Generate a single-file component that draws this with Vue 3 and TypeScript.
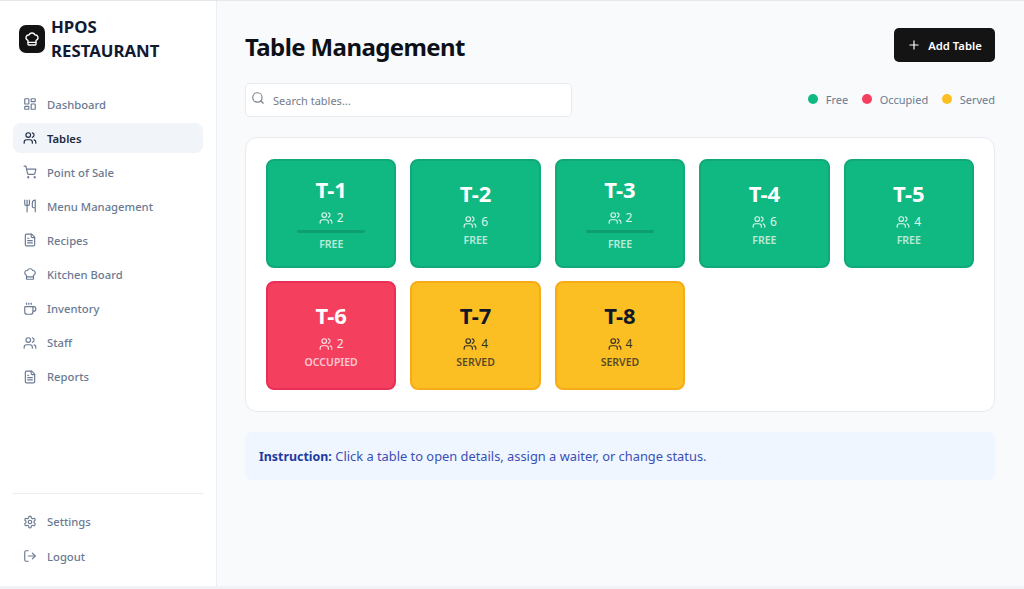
<script setup lang="ts">
interface NavItem { label: string; icon: string; active?: boolean }
interface TableItem { id: string; seats: number; status: 'free' | 'occupied' | 'served'; bar?: boolean }

const nav: NavItem[] = [
  { label: 'Dashboard', icon: 'grid' },
  { label: 'Tables', icon: 'users', active: true },
  { label: 'Point of Sale', icon: 'cart' },
  { label: 'Menu Management', icon: 'food' },
  { label: 'Recipes', icon: 'doc' },
  { label: 'Kitchen Board', icon: 'chef' },
  { label: 'Inventory', icon: 'coffee' },
  { label: 'Staff', icon: 'users' },
  { label: 'Reports', icon: 'doc' },
]
const bottom: NavItem[] = [
  { label: 'Settings', icon: 'gear' },
  { label: 'Logout', icon: 'logout' },
]
const tables: TableItem[] = [
  { id: 'T-1', seats: 2, status: 'free', bar: true },
  { id: 'T-2', seats: 6, status: 'free' },
  { id: 'T-3', seats: 2, status: 'free', bar: true },
  { id: 'T-4', seats: 6, status: 'free' },
  { id: 'T-5', seats: 4, status: 'free' },
  { id: 'T-6', seats: 2, status: 'occupied' },
  { id: 'T-7', seats: 4, status: 'served' },
  { id: 'T-8', seats: 4, status: 'served' },
]
const legend = [
  { label: 'Free', cls: 'free' },
  { label: 'Occupied', cls: 'occupied' },
  { label: 'Served', cls: 'served' },
]
const paths: Record<string, string[]> = {
  grid: [
    'M4 3h5a1 1 0 0 1 1 1v7a1 1 0 0 1-1 1H4a1 1 0 0 1-1-1V4a1 1 0 0 1 1-1z',
    'M15 3h5a1 1 0 0 1 1 1v3a1 1 0 0 1-1 1h-5a1 1 0 0 1-1-1V4a1 1 0 0 1 1-1z',
    'M15 12h5a1 1 0 0 1 1 1v7a1 1 0 0 1-1 1h-5a1 1 0 0 1-1-1v-7a1 1 0 0 1 1-1z',
    'M4 16h5a1 1 0 0 1 1 1v3a1 1 0 0 1-1 1H4a1 1 0 0 1-1-1v-3a1 1 0 0 1 1-1z',
  ],
  users: ['M16 21v-2a4 4 0 0 0-4-4H6a4 4 0 0 0-4 4v2', 'M9 3a4 4 0 1 0 0 8 4 4 0 0 0 0-8z', 'M22 21v-2a4 4 0 0 0-3-3.87', 'M16 3.13a4 4 0 0 1 0 7.75'],
  cart: ['M8 21a1 1 0 1 0 0-.01z', 'M19 21a1 1 0 1 0 0-.01z', 'M2 2h3l2.7 12.4a2 2 0 0 0 2 1.6h8.7a2 2 0 0 0 2-1.6L22 7H6'],
  food: ['M3 2v7c0 1.1.9 2 2 2h4a2 2 0 0 0 2-2V2', 'M7 2v20', 'M21 15V2a5 5 0 0 0-5 5v6c0 1.1.9 2 2 2h3zm0 0v7'],
  doc: ['M15 2H6a2 2 0 0 0-2 2v16a2 2 0 0 0 2 2h12a2 2 0 0 0 2-2V7z', 'M14 2v4a2 2 0 0 0 2 2h4', 'M10 9H8', 'M16 13H8', 'M16 17H8'],
  chef: ['M17 21a1 1 0 0 0 1-1v-5.35c0-.457.316-.844.727-1.041a4 4 0 0 0-2.134-7.589 5 5 0 0 0-9.186 0 4 4 0 0 0-2.134 7.588c.411.198.727.585.727 1.041V20a1 1 0 0 0 1 1z', 'M6 17h12'],
  coffee: ['M10 2v2', 'M14 2v2', 'M6 2v2', 'M16 8a1 1 0 0 1 1 1v8a4 4 0 0 1-4 4H7a4 4 0 0 1-4-4V9a1 1 0 0 1 1-1h14a4 4 0 1 1 0 8h-1'],
  gear: ['M12.2 2h-.4a2 2 0 0 0-2 2v.2a2 2 0 0 1-1 1.7l-.4.3a2 2 0 0 1-2 0l-.2-.1a2 2 0 0 0-2.7.7l-.2.4a2 2 0 0 0 .7 2.7l.2.1a2 2 0 0 1 1 1.7v.5a2 2 0 0 1-1 1.8l-.2.1a2 2 0 0 0-.7 2.7l.2.4a2 2 0 0 0 2.7.7l.2-.1a2 2 0 0 1 2 0l.4.3a2 2 0 0 1 1 1.7v.2a2 2 0 0 0 2 2h.4a2 2 0 0 0 2-2v-.2a2 2 0 0 1 1-1.7l.4-.3a2 2 0 0 1 2 0l.2.1a2 2 0 0 0 2.7-.7l.2-.4a2 2 0 0 0-.7-2.7l-.2-.1a2 2 0 0 1-1-1.8v-.5a2 2 0 0 1 1-1.7l.2-.1a2 2 0 0 0 .7-2.7l-.2-.4a2 2 0 0 0-2.7-.7l-.2.1a2 2 0 0 1-2 0l-.4-.3a2 2 0 0 1-1-1.7V4a2 2 0 0 0-2-2z', 'M12 9a3 3 0 1 0 0 6 3 3 0 0 0 0-6z'],
  logout: ['M9 21H5a2 2 0 0 1-2-2V5a2 2 0 0 1 2-2h4', 'M16 17l5-5-5-5', 'M21 12H9'],
}
</script>

<template>
  <div class="app">
    <aside class="sidebar">
      <div class="brand">
        <div class="logo">
          <svg viewBox="0 0 24 24" width="16" height="16" fill="none" stroke="#fff" stroke-width="2" stroke-linecap="round" stroke-linejoin="round">
            <path v-for="d in paths.chef" :key="d" :d="d" />
          </svg>
        </div>
        <div class="brand-name">HPOS RESTAURANT</div>
      </div>
      <nav class="nav">
        <a v-for="item in nav" :key="item.label" class="nav-item" :class="{ active: item.active }">
          <svg viewBox="0 0 24 24" width="14" height="14" fill="none" stroke="currentColor" stroke-width="2" stroke-linecap="round" stroke-linejoin="round">
            <path v-for="d in paths[item.icon]" :key="d" :d="d" />
          </svg>
          <span>{{ item.label }}</span>
        </a>
      </nav>
      <div class="nav bottom">
        <a v-for="item in bottom" :key="item.label" class="nav-item">
          <svg viewBox="0 0 24 24" width="14" height="14" fill="none" stroke="currentColor" stroke-width="2" stroke-linecap="round" stroke-linejoin="round">
            <path v-for="d in paths[item.icon]" :key="d" :d="d" />
          </svg>
          <span>{{ item.label }}</span>
        </a>
      </div>
    </aside>

    <main class="main">
      <header class="head">
        <h1>Table Management</h1>
        <button class="add" type="button">
          <svg viewBox="0 0 24 24" width="14" height="14" fill="none" stroke="currentColor" stroke-width="2" stroke-linecap="round">
            <path d="M5 12h14" /><path d="M12 5v14" />
          </svg>
          Add Table
        </button>
      </header>

      <div class="tools">
        <label class="search">
          <svg viewBox="0 0 24 24" width="14" height="14" fill="none" stroke="#7b818c" stroke-width="2" stroke-linecap="round">
            <path d="M11 3a8 8 0 1 0 0 16 8 8 0 0 0 0-16z" /><path d="M21 21l-4.3-4.3" />
          </svg>
          <input type="text" placeholder="Search tables..." />
        </label>
        <div class="legend">
          <span v-for="l in legend" :key="l.label" class="legend-item">
            <i class="dot" :class="l.cls"></i>{{ l.label }}
          </span>
        </div>
      </div>

      <section class="card">
        <div class="grid">
          <div v-for="t in tables" :key="t.id" class="tile" :class="t.status">
            <div class="tile-id">{{ t.id }}</div>
            <div class="seats">
              <svg viewBox="0 0 24 24" width="14" height="14" fill="none" stroke="currentColor" stroke-width="2" stroke-linecap="round" stroke-linejoin="round">
                <path v-for="d in paths.users" :key="d" :d="d" />
              </svg>
              {{ t.seats }}
            </div>
            <div v-if="t.bar" class="bar"></div>
            <div class="status">{{ t.status }}</div>
          </div>
        </div>
      </section>

      <div class="info"><b>Instruction:</b> Click a table to open details, assign a waiter, or change status.</div>
    </main>
  </div>
</template>

<style>
html, body { margin: 0; background: #f8fafc; }
</style>

<style scoped>
.app {
  display: flex;
  box-sizing: border-box;
  width: 1024px;
  height: 589px;
  overflow: hidden;
  border-top: 1px solid #e5e7eb;
  border-bottom: 3px solid #f1f2f6;
  font-family: "Noto Sans", "Open Sans", sans-serif;
  background: #f8fafc;
  color: #111827;
}
.sidebar {
  box-sizing: border-box;
  flex: 0 0 217px;
  display: flex;
  flex-direction: column;
  padding: 0 13px;
  background: #fff;
  border-right: 1px solid #eceef2;
}
.brand {
  display: flex;
  align-items: center;
  gap: 6px;
  padding: 7px 6px 0;
  height: 61px;
}
.logo {
  flex: none;
  display: flex;
  align-items: center;
  justify-content: center;
  width: 26px;
  height: 28px;
  border-radius: 7px;
  background: #131313;
}
.brand-name {
  width: 130px;
  font-size: 16.8px;
  line-height: 24px;
  font-weight: 700;
  color: #101a33;
}
.nav {
  display: flex;
  flex-direction: column;
  gap: 4.1px;
  margin-top: 20px;
}
.nav-item {
  display: flex;
  align-items: center;
  gap: 10px;
  height: 30px;
  padding: 0 10px;
  border-radius: 8px;
  font-size: 11.25px;
  font-weight: 500;
  color: #6b7a92;
}
.nav-item.active {
  background: #f1f4f9;
  color: #1f2a3f;
  font-weight: 600;
}
.bottom {
  margin-top: auto;
  padding: 13px 0 15px;
  border-top: 1px solid #ececf0;
}
.main {
  flex: 1;
  min-width: 0;
  padding: 27px 29px 0 28px;
}
.head {
  display: flex;
  align-items: center;
  justify-content: space-between;
  height: 34px;
}
h1 {
  margin: 3px 0 0;
  font-size: 24px;
  line-height: 36px;
  font-weight: 700;
  letter-spacing: -0.6px;
  color: #0d1017;
}
.add {
  display: flex;
  align-items: center;
  justify-content: center;
  gap: 7px;
  width: 101px;
  height: 34px;
  padding: 0;
  border: 0;
  border-radius: 5px;
  background: #141414;
  color: #fff;
  font: 600 11.25px "Noto Sans", sans-serif;
}
.tools {
  display: flex;
  align-items: center;
  justify-content: space-between;
  margin-top: 21px;
}
.search {
  box-sizing: border-box;
  display: flex;
  align-items: center;
  gap: 8px;
  width: 327px;
  height: 34px;
  padding: 0 5px;
  background: #fff;
  border: 1px solid #e8eaee;
  border-radius: 5px;
}
.search svg { margin-top: -4px; }
.search input {
  flex: 1;
  min-width: 0;
  border: 0;
  outline: 0;
  padding: 0;
  background: transparent;
  font: 400 11px "Noto Sans", sans-serif;
}
.search input::placeholder { color: #757c88; opacity: 1; }
.legend {
  display: flex;
  gap: 13.5px;
  margin-top: -2px;
  font-size: 11px;
  color: #6b7a92;
}
.legend-item {
  display: flex;
  align-items: center;
  gap: 8px;
}
.dot {
  width: 10px;
  height: 10px;
  border-radius: 50%;
}
.dot.free { background: #10b981; }
.dot.occupied { background: #f43f5e; }
.dot.served { background: #fbbf24; }
.card {
  box-sizing: border-box;
  height: 275px;
  margin-top: 20px;
  padding: 21px 20px;
  background: #fff;
  border: 1px solid #e8eaee;
  border-radius: 12px;
}
.grid {
  display: grid;
  grid-template-columns: repeat(5, 1fr);
  grid-auto-rows: 109px;
  gap: 13px 14px;
}
.tile {
  box-sizing: border-box;
  display: flex;
  flex-direction: column;
  align-items: center;
  justify-content: center;
  padding-bottom: 1px;
  border: 2px solid;
  border-radius: 8px;
}
.tile.free { background: #10b981; border-color: #11a87a; color: #fff; }
.tile.occupied { background: #f43f5e; border-color: #e92f58; color: #fff; }
.tile.served { background: #fbbf24; border-color: #f7ab17; color: #111827; }
.tile-id {
  font-size: 22px;
  line-height: 28px;
  font-weight: 700;
}
.seats {
  display: flex;
  align-items: center;
  gap: 4px;
  margin-top: 7px;
  height: 16px;
  font-size: 12px;
  opacity: 0.85;
}
.bar {
  width: 68px;
  height: 3px;
  margin: 4px 0 1px;
  border-radius: 2px;
  background: #0d9f70;
}
.status {
  margin-top: 3px;
  font-size: 10.5px;
  line-height: 15px;
  font-weight: 600;
  text-transform: uppercase;
  opacity: 0.7;
}
.info {
  box-sizing: border-box;
  display: flex;
  align-items: center;
  gap: 3.5px;
  height: 48px;
  margin-top: 20px;
  padding: 0 14px;
  border-radius: 8px;
  background: #eff6ff;
  color: #3b4fb8;
  font-size: 12.85px;
}
.info b { color: #1e3a9f; font-weight: 700; font-size: 12.4px; }
</style>
